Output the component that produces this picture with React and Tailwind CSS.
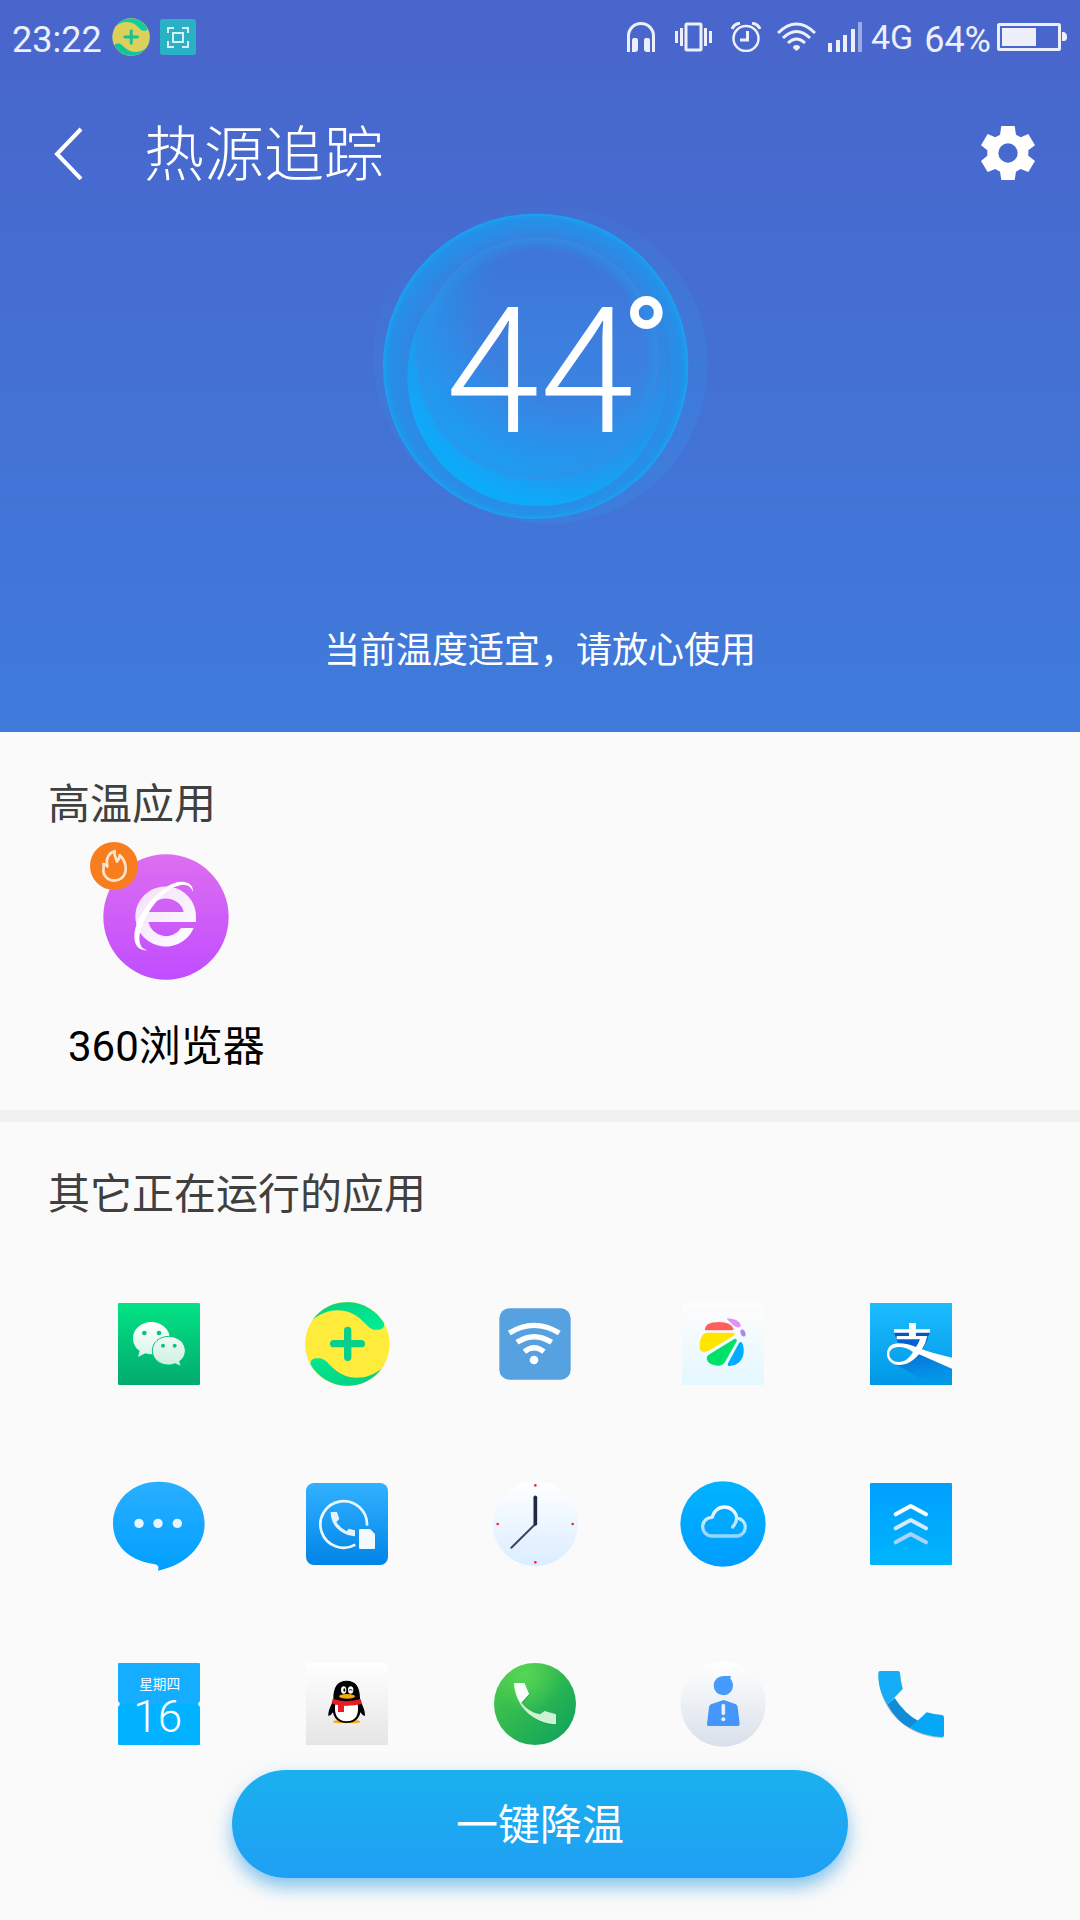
import React from "react";

function Grad({ id, from, to, diagonal }) {
  return (
    <linearGradient id={id} x1="0" y1="0" x2={diagonal ? "1" : "0"} y2="1">
      <stop offset="0" stopColor={from} />
      <stop offset="1" stopColor={to} />
    </linearGradient>
  );
}

function AppSvg({ x, children }) {
  return (
    <svg className="size-24 shrink-0" viewBox={`${x} 48 288 288`} aria-hidden="true">
      {children}
    </svg>
  );
}

const HANDSET =
  "M1272 129L1303 129L1317 162L1294 188Q1315 216 1350 223L1364 213L1398 223L1398 253C1330 250 1275 200 1272 129Z";

function WeChat() {
  return (
    <AppSvg x={63}>
      <defs>
        <Grad id="wc" from="#02e385" to="#02aa6e" />
        <Grad id="wc1" from="#ffffff" to="#d8f5e8" />
        <Grad id="wc2" from="#eefaf4" to="#cdf0e0" />
      </defs>
      <rect x="84" y="69" width="246" height="246" rx="4" fill="url(#wc)" />
      <path d="M184 126C214 126 239 147 239 174C239 202 214 223 184 223Q174 223 166 220L144 231L149 213C136 204 129 190 129 175C129 147 154 126 184 126Z" fill="url(#wc1)" />
      <path d="M236 169C264 169 286 188 286 212C286 225 280 236 269 244L273 259L255 251C246 254 241 255 236 255C208 255 187 236 187 212C187 188 208 169 236 169Z" fill="url(#wc2)" stroke="#05c47b" strokeWidth="3" />
      <g fill="#04c87c">
        <circle cx="163" cy="159" r="7" />
        <circle cx="207" cy="159" r="7" />
        <circle cx="219" cy="197" r="6" />
        <circle cx="254" cy="197" r="6" />
      </g>
    </AppSvg>
  );
}

const SWOOSH =
  "M668 119A128 128 0 0 1 882 130Q886 149 861 149C842 151 834 138 814 119C772 80 712 82 668 119Z";

function Guard() {
  return (
    <AppSvg x={627}>
      <defs>
        <Grad id="gd1" from="#06d085" to="#00ee95" diagonal />
        <Grad id="gd2" from="#04cc84" to="#04e890" diagonal />
      </defs>
      <circle cx="772" cy="192" r="127" fill="#ffeb3c" />
      <path d={SWOOSH} fill="url(#gd1)" />
      <path d={SWOOSH} fill="url(#gd2)" transform="rotate(180 772 192)" />
      <path d="M773 151V232M731 191H814" stroke="#08cf8a" strokeWidth="22" strokeLinecap="round" />
    </AppSvg>
  );
}

function WifiApp() {
  return (
    <AppSvg x={1191}>
      <rect x="1228" y="85" width="214" height="214" rx="30" fill="#56a1e0" />
      <g fill="none" stroke="#fff" strokeWidth="16">
        <path d="M1258 159Q1332 113 1408 159" />
        <path d="M1281 187Q1332 153 1385 187" />
        <path d="M1303 215Q1332 191 1362 215" />
      </g>
      <circle cx="1332" cy="240" r="13" fill="#fff" />
    </AppSvg>
  );
}

function BeachBall() {
  return (
    <AppSvg x={585}>
      <defs>
        <Grad id="bb" from="#fffcfc" to="#e3f8ff" />
      </defs>
      <rect x="606" y="69" width="246" height="246" rx="3" fill="url(#bb)" />
      <path d="M675 151Q673 126 718 126Q753 126 761 147Q761 151 757 151Z" fill="#ff5f5c" />
      <path d="M740 116C760 113 784 125 782 139Q776 146 762 138Z" fill="#e191f5" />
      <ellipse cx="789" cy="159" rx="7" ry="11" fill="#a78ae6" transform="rotate(-20 789 159)" />
      <path d="M659 205Q658 158 684 158H760Q768 161 761 167L685 213Q662 222 659 205Z" fill="#ffe500" />
      <path d="M685 225L763 177Q772 173 770 184L735 246Q727 260 704 256Q675 247 681 230Z" fill="#00e169" />
      <path d="M777 189Q784 181 788 192C798 225 784 256 748 258Q741 257 744 250Z" fill="#00acff" />
    </AppSvg>
  );
}

function AliPay() {
  return (
    <AppSvg x={1149}>
      <defs>
        <Grad id="ap" from="#1cbcff" to="#0098e6" />
        <linearGradient id="ap2" x1="0.4" y1="0" x2="0.55" y2="1">
          <stop offset="0.2" stopColor="#0062d2" />
          <stop offset="1" stopColor="#0062d2" stopOpacity="0" />
        </linearGradient>
      </defs>
      <rect x="1170" y="69" width="246" height="246" fill="url(#ap)" />
      <path d="M1242 156H1350L1345 166L1342 180L1326 212L1416 250V310L1330 300L1240 250L1270 250L1300 220L1290 200L1255 192Z" fill="url(#ap2)" />
      <path d="M1242 158H1350L1345 167H1342V178H1252Z" fill="#0058c8" />
      <path d="M1242 148H1350V158H1307V168H1342Q1338 188 1326 208Q1350 218 1416 233V266L1317 223C1298 245 1280 255 1258 255C1235 255 1221 240 1221 222C1221 202 1235 190 1256 190C1275 190 1292 195 1308 201Q1316 190 1320 178H1250V168H1287V158H1242ZM1287 129H1307V150H1287ZM1299 216C1285 205 1268 200 1254 201C1238 202 1228 210 1228 223C1229 237 1240 246 1257 246C1275 246 1288 234 1299 216Z" fill="#fff" fillRule="evenodd" />
      <rect x="1287" y="129" width="20" height="40" fill="#fff" />
    </AppSvg>
  );
}

function Messages() {
  return (
    <AppSvg x={63}>
      <defs>
        <Grad id="ms" from="#2aafff" to="#009fff" />
      </defs>
      <path d="M206 65C286 65 344 120 344 192C344 262 282 316 204 332C206 322 209 315 190 312C112 300 69 252 69 190C69 120 128 65 206 65Z" fill="url(#ms)" />
      <g fill="#e6f5ff">
        <circle cx="147" cy="190" r="14" />
        <circle cx="204" cy="190" r="14" />
        <circle cx="262" cy="190" r="14" />
      </g>
    </AppSvg>
  );
}

function SimDialer() {
  return (
    <AppSvg x={627}>
      <defs>
        <Grad id="sd" from="#33b1ff" to="#0084e7" />
      </defs>
      <rect x="648" y="69" width="246" height="246" rx="24" fill="url(#sd)" />
      <path d="M831 197A70 70 0 1 0 796 254" fill="none" stroke="#edf7ff" strokeWidth="8" />
      <path d="M722 156H741L748 177L739 186Q751 205 770 214L776 206L795 211V229C750 224 722 195 722 156Z" fill="#e3f2fd" />
      <path d="M811 207H840L855 222V264Q855 267 852 267H811Q807 267 807 263V211Q807 207 811 207Z" fill="#f2f9ff" />
    </AppSvg>
  );
}

function Clock() {
  return (
    <AppSvg x={1191}>
      <defs>
        <Grad id="ck" from="#ffffff" to="#daedff" />
      </defs>
      <circle cx="1336" cy="191" r="128" fill="url(#ck)" />
      <g fill="#f3282d">
        <circle cx="1336" cy="76" r="4" />
        <circle cx="1336" cy="307" r="4" />
        <circle cx="1223" cy="192" r="4" />
        <circle cx="1448" cy="192" r="4" />
      </g>
      <path d="M1336 192L1264 263" stroke="#3a4566" strokeWidth="6" strokeLinecap="round" />
      <path d="M1336 112V192" stroke="#1f2940" strokeWidth="11" strokeLinecap="round" />
    </AppSvg>
  );
}

function Cloud() {
  return (
    <AppSvg x={585}>
      <defs>
        <Grad id="cl" from="#00b4ff" to="#009cff" />
        <Grad id="cl2" from="#f4fbff" to="#94d7ff" />
      </defs>
      <circle cx="729" cy="192" r="128" fill="url(#cl)" />
      <path d="M758 201Q770 188 770 172A37 37 0 0 0 697 172A28 28 0 0 0 695 228H773A27 27 0 0 0 778 176" fill="none" stroke="url(#cl2)" strokeWidth="10" strokeLinecap="round" strokeLinejoin="round" />
    </AppSvg>
  );
}

function Boost() {
  return (
    <AppSvg x={1149}>
      <defs>
        <Grad id="bo" from="#009fff" to="#00b5fb" />
      </defs>
      <rect x="1170" y="69" width="246" height="246" rx="3" fill="url(#bo)" />
      <g fill="none" strokeWidth="12" strokeLinecap="round" strokeLinejoin="bevel">
        <path d="M1247 163L1292 138L1338 163" stroke="#ffffff" />
        <path d="M1247 205L1292 180L1338 205" stroke="#d6eaff" />
        <path d="M1247 247L1292 222L1338 247" stroke="#a9d3ff" />
      </g>
    </AppSvg>
  );
}

function Calendar() {
  return (
    <AppSvg x={63}>
      <path d="M87 69H327Q330 69 330 72V182L324 192H90L84 182V72Q84 69 87 69Z" fill="#15adff" />
      <path d="M90 192H324L330 202V312Q330 315 327 315H87Q84 315 84 312V202Z" fill="#00b2ff" />
      <text x="209" y="147" fontSize="41" textAnchor="middle" fill="#fff">星期四</text>
      <text x="203" y="276" fontSize="132" textAnchor="middle" fill="#fff" className="font-light">16</text>
    </AppSvg>
  );
}

function Penguin() {
  return (
    <AppSvg x={627}>
      <defs>
        <Grad id="qq" from="#ffffff" to="#e5e5e5" />
      </defs>
      <rect x="648" y="69" width="246" height="246" fill="url(#qq)" />
      <ellipse cx="750" cy="245" rx="21" ry="5" fill="#faab07" />
      <ellipse cx="790" cy="245" rx="21" ry="5" fill="#faab07" />
      <path d="M770 122C797 122 810 140 810 176C812 190 826 205 825 228Q818 228 811 217C808 236 794 249 770 249C746 249 732 236 729 217Q722 228 715 228C714 205 729 190 730 176C730 140 743 122 770 122Z" fill="#000" />
      <path d="M736 192Q770 200 803 192C808 222 798 244 770 244C742 244 731 222 736 192Z" fill="#fff" />
      <ellipse cx="761" cy="150" rx="8" ry="11" fill="#fff" />
      <ellipse cx="782" cy="150" rx="8" ry="11" fill="#fff" />
      <ellipse cx="763" cy="150" rx="3" ry="5" fill="#000" />
      <path d="M777 151Q782 146 787 151" fill="none" stroke="#000" strokeWidth="3" />
      <ellipse cx="771" cy="169" rx="24" ry="7" fill="#faab07" />
      <path d="M728 177Q770 190 812 177L816 191Q790 198 762 197V216H744V195Q732 193 725 189Z" fill="#eb1923" />
    </AppSvg>
  );
}

function GreenPhone() {
  return (
    <AppSvg x={1191}>
      <defs>
        <Grad id="gp" from="#50cc46" to="#0aa15e" diagonal />
        <radialGradient id="gp3" cx="0.38" cy="0.15" r="0.45">
          <stop offset="0" stopColor="#5cdb58" stopOpacity="0.8" />
          <stop offset="1" stopColor="#5cdb58" stopOpacity="0" />
        </radialGradient>
      </defs>
      <circle cx="1335" cy="192" r="123" fill="url(#gp)" />
      <circle cx="1335" cy="192" r="123" fill="url(#gp3)" />
      <path d={HANDSET} fill="#0b8a45" opacity="0.35" transform="translate(2 4)" />
      <path d={HANDSET} fill="#cff2d6" />
      <path d="M1272 129L1303 129L1317 162L1292 190Q1274 160 1272 129Z" fill="#fbfffb" />
    </AppSvg>
  );
}

function Contact() {
  return (
    <AppSvg x={585}>
      <defs>
        <Grad id="ct" from="#ffffff" to="#d9e0ea" />
      </defs>
      <circle cx="729" cy="192" r="128" fill="url(#ct)" />
      <path d="M731 108H752Q754 112 750 115Q759 124 759 138A29 29 0 1 1 731 108Z" fill="#479bff" />
      <path d="M731 180L768 193Q772 196 773 202L779 252Q779 258 774 258H686Q680 258 681 252L687 202Q688 196 693 193Z" fill="#4396fa" />
      <path d="M730 197V220" stroke="#e8f1fd" strokeWidth="11" strokeLinecap="round" />
      <circle cx="730" cy="238" r="6" fill="#e8f1fd" />
    </AppSvg>
  );
}

function BluePhone() {
  return (
    <AppSvg x={1149}>
      <path d="M1200 97L1258 97L1268 148L1240 178Q1270 222 1312 242L1340 221L1391 230V288Q1391 294 1385 294C1270 288 1194 200 1196 101Z" fill="#000" opacity="0.22" />
      <path d="M1222 194L1244 174Q1275 222 1314 242L1290 264Q1250 244 1222 194Z" fill="#0f8bd8" />
      <path d="M1200 93H1254Q1260 93 1260 99Q1261 123 1268 146L1222 194C1201 160 1194 130 1195 99Q1195 93 1200 93Z" fill="#16acf8" />
      <path d="M1340 217Q1362 224 1386 225Q1392 226 1392 232V286Q1392 292 1386 291Q1333 289 1290 264Z" fill="#04a8f6" />
    </AppSvg>
  );
}

const RUNNING = [
  ["微信", WeChat],
  ["360卫士", Guard],
  ["无线网络", WifiApp],
  ["手机助手", BeachBall],
  ["支付宝", AliPay],
  ["信息", Messages],
  ["双卡拨号", SimDialer],
  ["时钟", Clock],
  ["云服务", Cloud],
  ["加速", Boost],
  ["日历", Calendar],
  ["QQ", Penguin],
  ["电话", GreenPhone],
  ["联系人", Contact],
  ["拨号", BluePhone],
];

function StatusBar() {
  return (
    <div className="flex h-[74px] items-center justify-between pl-3 pr-[13px] text-[36px] text-white/90">
      <div className="flex items-center gap-[10px]">
        <span className="pt-1.5 leading-10">23:22</span>
        <svg className="size-[38px]" viewBox="643 63 257 257" aria-hidden="true">
          <circle cx="772" cy="192" r="127" fill="#dbd05c" />
          <path d={SWOOSH} fill="#10cf9c" />
          <path d={SWOOSH} fill="#10c59a" transform="rotate(180 772 192)" />
          <path d="M773 150V234M730 191H815" stroke="#12c495" strokeWidth="20" strokeLinecap="round" />
        </svg>
        <svg className="size-9" viewBox="0 0 36 36" aria-hidden="true">
          <rect width="36" height="36" rx="3" fill="#2bb1c5" />
          <g fill="none" stroke="#d5f0f8" strokeWidth="2">
            <rect x="13" y="14" width="10" height="9" />
            <path d="M8 14V9H14M22 9H28V14M28 22V28H22M14 28H8V22" />
          </g>
        </svg>
      </div>
      <div className="flex items-center">
        <svg className="h-[30px] w-7" viewBox="0 0 28 30" fill="currentColor" aria-hidden="true">
          <path d="M1.500 30V14A12.500 12.500 0 0 1 26.500 14V30" fill="none" stroke="currentColor" strokeWidth="3" />
          <path d="M5 30V18Q5 16 7 16H9Q11 16 11 18V27Q11 30 8 30ZM23 30V18Q23 16 21 16H19Q17 16 17 18V27Q17 30 20 30Z" />
        </svg>
        <svg className="ml-5 h-[30px] w-[37px]" viewBox="0 0 37 30" fill="currentColor" aria-hidden="true">
          <rect x="11" y="2" width="15" height="26" rx="1" fill="none" stroke="currentColor" strokeWidth="3" />
          <path d="M0 9H3V21H0ZM5 6H8V24H5ZM29 6H32V24H29ZM34 9H37V21H34Z" />
        </svg>
        <svg className="ml-[19px] h-[30px] w-[30px]" viewBox="0 0 30 30" fill="none" stroke="currentColor" aria-hidden="true">
          <circle cx="15" cy="16.500" r="12.500" strokeWidth="2.500" />
          <path d="M16.500 9V18H9" strokeWidth="3" />
          <path d="M1 7Q3 2 9 1M29 7Q27 2 21 1" strokeWidth="3" />
        </svg>
        <svg className="ml-4 h-[30px] w-[39px]" viewBox="0 0 39 30" fill="none" stroke="currentColor" strokeWidth="3" aria-hidden="true">
          <path d="M1 11Q19.500 -7 38 11" />
          <path d="M6 16Q19.500 3 33 16" />
          <path d="M11 21Q19.500 13 28 21" />
          <path d="M19.500 29L16 26Q16 23 19.500 23Q23 23 23 26Z" fill="currentColor" stroke="none" />
        </svg>
        <svg className="ml-3 h-[30px] w-[34px]" viewBox="0 0 34 30" fill="currentColor" aria-hidden="true">
          <path d="M0 21H4V30H0ZM8 18H12V30H8ZM15 13H19V30H15ZM23 7H27V30H23Z" />
          <path d="M30 0H34V30H30Z" opacity="0.5" />
        </svg>
        <span className="ml-[9px] text-[34px] leading-10">4G</span>
        <span className="ml-[11px] pt-1.5 leading-10">64%</span>
        <svg className="ml-[6px] h-7 w-[70px]" viewBox="0 0 70 28" aria-hidden="true">
          <rect x="1.500" y="1.500" width="61" height="25" rx="1" fill="none" stroke="currentColor" strokeWidth="3" />
          <path d="M5 5H39V23H5ZM65 9H67Q70 10 70 14Q70 18 67 18H65Z" fill="currentColor" />
        </svg>
      </div>
    </div>
  );
}

function Orb() {
  return (
    <div className="relative mx-auto h-[350px] w-[400px]">
      <svg className="size-full" viewBox="0 0 1200 1050" aria-hidden="true">
        <defs>
          <linearGradient id="halo" x1="0.1" y1="0.1" x2="0.7" y2="0.7">
            <stop offset="0.2" stopColor="#2f9aeb" stopOpacity="0.02" />
            <stop offset="1" stopColor="#2f9aeb" stopOpacity="0.22" />
          </linearGradient>
          <linearGradient id="halo2" x1="0" y1="0.15" x2="0" y2="0.6">
            <stop offset="0" stopColor="#2f9aeb" stopOpacity="0" />
            <stop offset="1" stopColor="#2f9aeb" stopOpacity="0.16" />
          </linearGradient>
          <radialGradient id="ball">
            <stop offset="0.7" stopColor="#3b82e0" stopOpacity="0.9" />
            <stop offset="0.86" stopColor="#2f88e3" />
            <stop offset="0.96" stopColor="#2590e8" />
            <stop offset="1" stopColor="#1c9df0" />
          </radialGradient>
          <linearGradient id="core" x1="0" y1="0" x2="0" y2="1">
            <stop offset="0" stopColor="#3f74d6" />
            <stop offset="0.5" stopColor="#3b80e0" />
            <stop offset="1" stopColor="#3489e5" />
          </linearGradient>
          <radialGradient id="glow" gradientUnits="userSpaceOnUse" cx="700" cy="380" r="600">
            <stop offset="0.45" stopColor="#0eaafa" stopOpacity="0" />
            <stop offset="0.75" stopColor="#0eaafa" stopOpacity="0.45" />
            <stop offset="0.95" stopColor="#0eaafa" stopOpacity="1" />
          </radialGradient>
          <radialGradient id="ring">
            <stop offset="0.88" stopColor="#2a93e8" stopOpacity="0" />
            <stop offset="1" stopColor="#2a93e8" stopOpacity="0.6" />
          </radialGradient>
          <filter id="soft" x="-20%" y="-20%" width="140%" height="140%">
            <feGaussianBlur stdDeviation="14" />
          </filter>
        </defs>
        <circle cx="570" cy="500" r="470" fill="url(#halo2)" />
        <circle cx="626" cy="525" r="477" fill="url(#halo)" />
        <circle cx="587" cy="529" r="458" fill="url(#ball)" />
        <circle cx="596" cy="504" r="356" fill="url(#core)" filter="url(#soft)" />
        <circle cx="591" cy="560" r="389" fill="url(#glow)" />
        <circle cx="596" cy="504" r="361" fill="url(#ring)" />
        <circle cx="596" cy="504" r="361" fill="none" stroke="#4a86e0" strokeWidth="4" opacity="0.5" />
        <circle cx="587" cy="529" r="455" fill="none" stroke="#1ba2f4" strokeWidth="5" opacity="0.7" />
      </svg>
      <p className="absolute left-[108px] top-[78px] flex items-start font-['Noto_Sans_CJK_SC',sans-serif] text-[176px] font-light leading-[176px]">
        44
        <span className="-ml-3.5 font-['Roboto',sans-serif] text-[124px] font-bold leading-[152px]">°</span>
      </p>
    </div>
  );
}

function Hot() {
  return (
    <button type="button" className="flex flex-col items-center text-black">
      <span className="relative block size-[126px]">
        <svg className="size-full" viewBox="311 102 378 378" aria-hidden="true">
          <defs>
            <Grad id="br" from="#dd6ef0" to="#c04dff" />
            <Grad id="br2" from="#f3dffb" to="#ffffff" diagonal />
          </defs>
          <circle cx="500" cy="291" r="188" fill="url(#br)" />
          <path d="M590 306V291A91 90 0 1 0 583 324H545A54 54 0 0 1 447 306ZM447 276A54 50 0 0 1 553 276Z" fill="url(#br2)" fillRule="evenodd" />
          <path d="M445 391Q420 388 420 355C425 290 490 205 545 195Q572 191 581 216Q582 187 548 185C495 182 405 280 405 350Q406 392 445 391Z" fill="#fff" />
        </svg>
        <svg className="absolute -left-[13px] -top-3 size-12" viewBox="273 66 144 144" aria-hidden="true">
          <circle cx="345" cy="138" r="72" fill="#f77d1f" />
          <path d="M347 93C343 106 351 112 354 125Q362 116 362 105C375 118 381 135 380 150C378 172 362 182 346 182C325 182 312 165 313 150Q315 140 313 132Q321 132 325 140C320 118 327 100 347 93Z" fill="none" stroke="#ffe3ca" strokeWidth="8" strokeLinejoin="round" />
        </svg>
      </span>
      <span className="mt-[37px] text-[42px] leading-[60px]">360浏览器</span>
    </button>
  );
}

export default function App() {
  return (
    <div className="min-h-screen bg-[#fafafa] font-['Roboto','Noto_Sans_CJK_SC',sans-serif]">
      <header className="bg-linear-to-b/srgb from-[#4965cb] to-[#3f7bdc] pb-[54px] text-white">
        <StatusBar />
        <div className="flex h-[116px] items-center pl-[52px] pr-[45px] pt-[42px]">
          <button type="button" aria-label="返回" className="shrink-0">
            <svg className="h-[54px] w-[32px]" viewBox="0 0 32 54" fill="none" stroke="currentColor" strokeWidth="4" aria-hidden="true">
              <path d="M29 3L5 28L29 53" />
            </svg>
          </button>
          <h1 className="ml-[60px] flex-1 pt-1.5 text-[60px] font-light leading-[60px]">热源追踪</h1>
          <button type="button" aria-label="设置" className="shrink-0">
            <svg className="size-[54px]" viewBox="0 0 162 162" fill="currentColor" fillRule="evenodd" aria-hidden="true">
              <path d="M61 0H101L105 26L119 34L142 24L162 58L142 73V89L162 105L142 138L119 129L105 137L101 162H61L57 137L43 129L20 138L0 105L19 89V73L0 58L20 24L43 34L57 26ZM81 52A29 29 0 1 0 81 110A29 29 0 1 0 81 52Z" />
            </svg>
          </button>
        </div>
        <Orb />
        <p className="mt-[84px] text-center text-[36px] leading-[54px]">当前温度适宜，请放心使用</p>
      </header>

      <section className="pb-[33px] pt-[43px]">
        <h2 className="px-12 text-[42px] leading-[60px] text-[#404040]">高温应用</h2>
        <div className="mt-[19px] flex px-[68px]">
          <Hot />
        </div>
      </section>
      <div className="h-3 bg-[#f1f1f1]" />
      <section className="pb-[42px] pt-[43px]">
        <h2 className="px-12 text-[42px] leading-[60px] text-[#404040]">其它正在运行的应用</h2>
        <ul className="mt-[71px] grid grid-cols-5 gap-y-[84px] pl-[65px] pr-[75px]">
          {RUNNING.map(([name, Icon]) => (
            <li key={name} className="flex justify-center">
              <button type="button" aria-label={name}>
                <Icon />
              </button>
            </li>
          ))}
        </ul>
        <div className="mt-[18px] flex justify-center">
          <button
            type="button"
            className="h-[108px] w-[57%] rounded-full bg-linear-to-b from-[#1ab0ee] to-[#209ff5] pt-1 text-[42px] leading-[60px] text-white shadow-[0_9px_18px_rgba(32,150,225,0.55)]"
          >
            一键降温
          </button>
        </div>
      </section>
    </div>
  );
}
